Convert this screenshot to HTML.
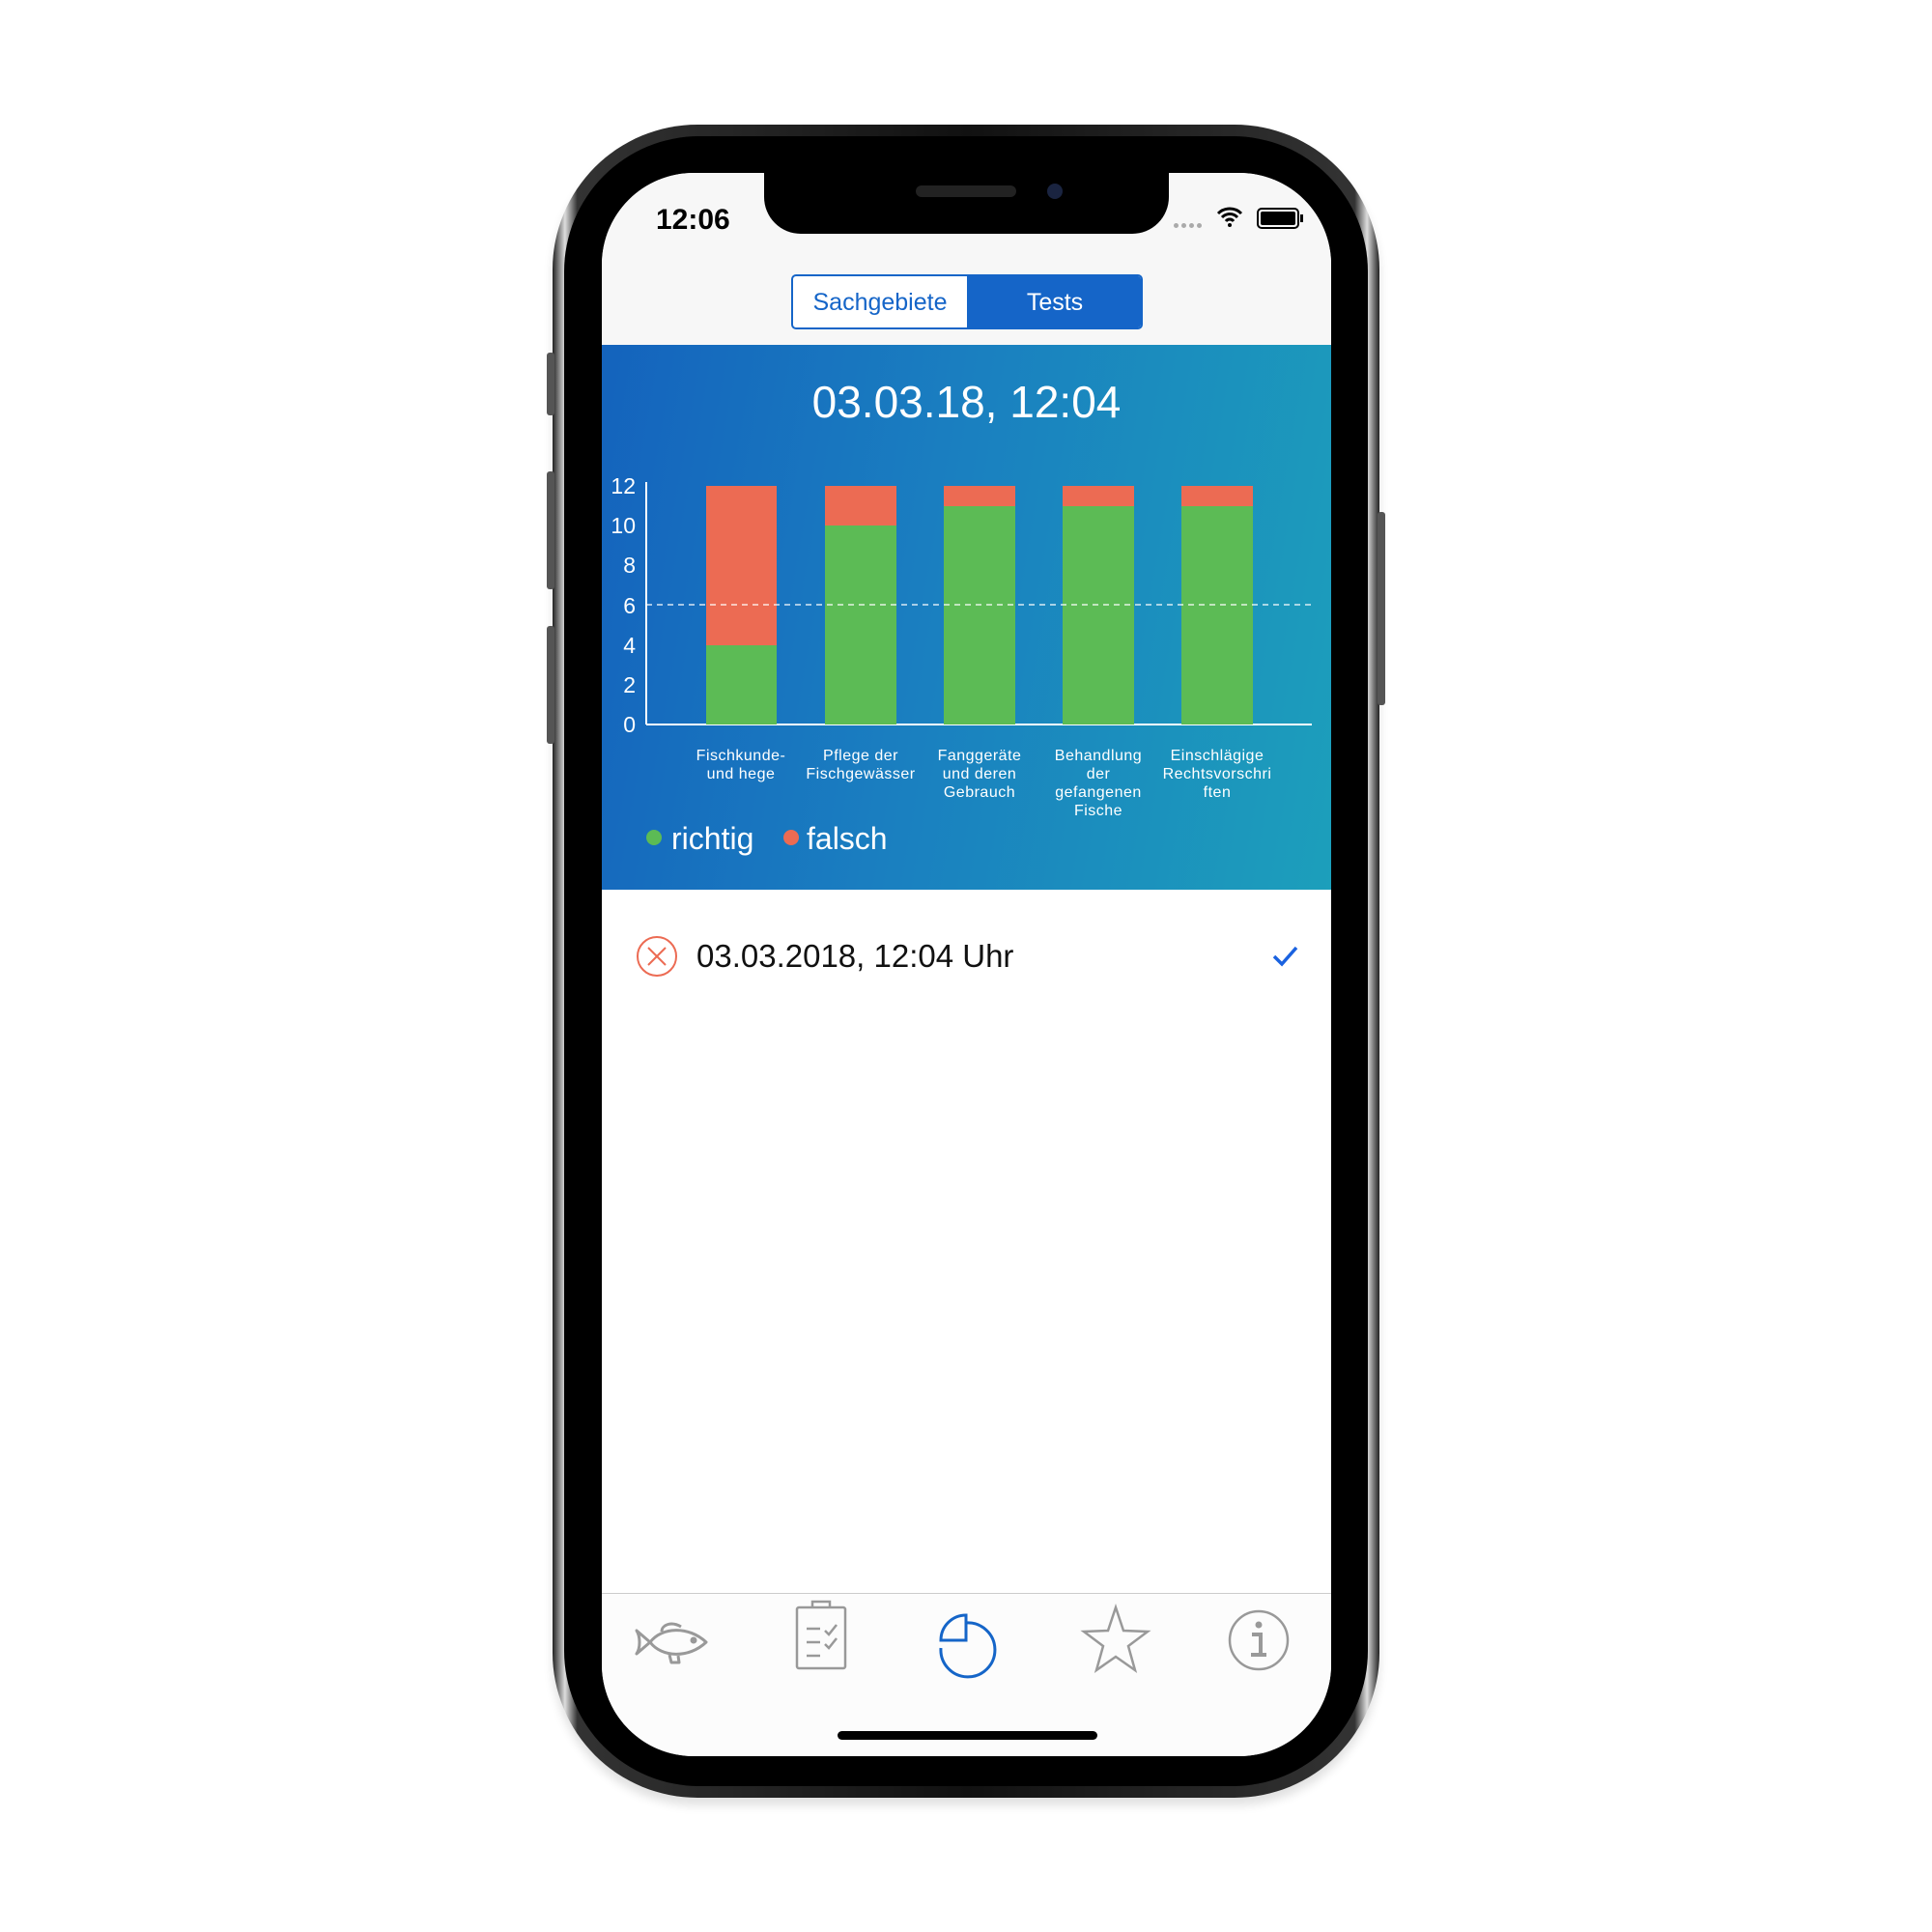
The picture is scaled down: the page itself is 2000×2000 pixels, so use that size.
<!DOCTYPE html>
<html><head><meta charset="utf-8"><style>
*{margin:0;padding:0;box-sizing:border-box}
body{width:2000px;height:2000px;background:#fff;position:relative;overflow:hidden;font-family:"Liberation Sans",sans-serif}
.abs{position:absolute}
#phone{left:572px;top:129px;width:856px;height:1732px;border-radius:150px;background:linear-gradient(90deg,#222,#ddd 1.5%,#333 3%,#111 50%,#333 97%,#ddd 98.5%,#222);box-shadow:0 8px 10px rgba(0,0,0,.12)}
#phone2{left:584px;top:141px;width:832px;height:1708px;border-radius:140px;background:#000}
#screen{left:623px;top:179px;width:755px;height:1639px;border-radius:95px;background:#fff;overflow:hidden}
</style></head><body>
<div id="phone" class="abs"></div>
<div id="phone2" class="abs"></div>
<div class="abs" style="left:566px;top:365px;width:8px;height:65px;background:#555;border-radius:3px"></div>
<div class="abs" style="left:566px;top:488px;width:8px;height:122px;background:#555;border-radius:3px"></div>
<div class="abs" style="left:566px;top:648px;width:8px;height:122px;background:#555;border-radius:3px"></div>
<div class="abs" style="left:1426px;top:530px;width:8px;height:200px;background:#555;border-radius:3px"></div>
<div id="screen" class="abs">
  <div class="abs" style="left:0;top:0;width:755px;height:178px;background:#f7f7f7"></div>
  <div class="abs" style="left:56px;top:32px;font-size:30px;font-weight:bold;color:#000">12:06</div>
  <div class="abs" style="left:0;top:178px;width:755px;height:564px;background:linear-gradient(100deg,#1463bd 0%,#1a7fc0 45%,#1c9fbb 100%)"></div>
  <div class="abs" style="left:196px;top:105px;width:364px;height:57px;border:2px solid #1565c8;border-radius:5px;overflow:hidden;background:#fff">
    <div class="abs" style="left:180px;top:0;width:184px;height:57px;background:#1565c8"></div>
    <div class="abs" style="left:0;top:13px;width:180px;text-align:center;font-size:25px;color:#1565c8">Sachgebiete</div>
    <div class="abs" style="left:180px;top:13px;width:182px;text-align:center;font-size:25px;color:#fff">Tests</div>
  </div>
  <div class="abs" style="left:0;top:210px;width:755px;text-align:center;font-size:46px;color:#fff">03.03.18, 12:04</div>
  <svg class="abs" style="left:0;top:0" width="755" height="1000">
    <g font-family="Liberation Sans" font-size="23" fill="#fff" text-anchor="end">
      <text x="35" y="332">12</text><text x="35" y="373">10</text><text x="35" y="414">8</text><text x="35" y="456">6</text><text x="35" y="497">4</text><text x="35" y="538">2</text><text x="35" y="579">0</text>
    </g>
    <line x1="46" y1="320" x2="46" y2="571" stroke="#fff" stroke-width="2"/>
    <line x1="46" y1="571" x2="735" y2="571" stroke="#fff" stroke-width="2"/>
    <rect x="108" y="324" width="73" height="165" fill="#ec6b53"/><rect x="108" y="489" width="73" height="82" fill="#5cbb55"/>
    <rect x="231" y="324" width="74" height="41" fill="#ec6b53"/><rect x="231" y="365" width="74" height="206" fill="#5cbb55"/>
    <rect x="354" y="324" width="74" height="21" fill="#ec6b53"/><rect x="354" y="345" width="74" height="226" fill="#5cbb55"/>
    <rect x="477" y="324" width="74" height="21" fill="#ec6b53"/><rect x="477" y="345" width="74" height="226" fill="#5cbb55"/>
    <rect x="600" y="324" width="74" height="21" fill="#ec6b53"/><rect x="600" y="345" width="74" height="226" fill="#5cbb55"/>
    <line x1="46" y1="447" x2="735" y2="447" stroke="#fff" stroke-width="1.3" stroke-dasharray="6,5"/>
    <g font-family="Liberation Sans" font-size="16" fill="#fff" text-anchor="middle" letter-spacing="0.5">
      <text x="144" y="608">Fischkunde-</text><text x="144" y="627">und hege</text>
      <text x="268" y="608">Pflege der</text><text x="268" y="627">Fischgewässer</text>
      <text x="391" y="608">Fanggeräte</text><text x="391" y="627">und deren</text><text x="391" y="646">Gebrauch</text>
      <text x="514" y="608">Behandlung</text><text x="514" y="627">der</text><text x="514" y="646">gefangenen</text><text x="514" y="665">Fische</text>
      <text x="637" y="608">Einschlägige</text><text x="637" y="627">Rechtsvorschri</text><text x="637" y="646">ften</text>
    </g>
    <circle cx="54" cy="688" r="8" fill="#5cbb55"/>
    <text x="72" y="700" font-family="Liberation Sans" font-size="32" fill="#fff">richtig</text>
    <circle cx="196" cy="688" r="8" fill="#ec6b53"/>
    <text x="212" y="700" font-family="Liberation Sans" font-size="32" fill="#fff">falsch</text>
    <circle cx="57" cy="811" r="20" fill="none" stroke="#ec6b53" stroke-width="2"/>
    <path d="M48 802L66 820M66 802L48 820" stroke="#ec6b53" stroke-width="2"/>
    <text x="98" y="822" font-family="Liberation Sans" font-size="33" fill="#111">03.03.2018, 12:04 Uhr</text>
    <path d="M696 811l8 8 15-17" fill="none" stroke="#1a62e0" stroke-width="3.5"/>
  </svg>
  <div class="abs" style="left:0;top:1470px;width:755px;height:1px;background:#ccc"></div>
  <div class="abs" style="left:0;top:1471px;width:755px;height:168px;background:#fcfcfc"></div>
  <svg class="abs" style="left:0;top:1471px" width="755" height="168">
    <g fill="none" stroke="#999" stroke-width="3" stroke-linejoin="round">
      <path d="M50 50 C62 34, 90 33, 108 50 C90 67, 62 66, 50 50 Z"/>
      <path d="M50 50 L36 38 C40 44, 40 56, 36 62 Z"/>
      <path d="M62 39 C62 32, 72 28, 82 34"/>
      <path d="M70 63 l2 8 h8 l-1-7"/>
      <circle cx="95" cy="48" r="2" fill="#999"/>
    </g>
    <g fill="none" stroke="#999" stroke-width="2.5">
      <rect x="202" y="14" width="50" height="63" rx="2"/>
      <path d="M218 14v-6h18v6M212 36h14M212 50h14M212 64h14M231 38l4 4 8-10M231 52l4 4 8-10"/>
    </g>
    <g fill="none" stroke="#1565c8" stroke-width="3">
      <path d="M377 30a28 28 0 1 1-26 26"/>
      <path d="M351 48a26 26 0 0 1 26-26v26h-26z"/>
    </g>
    <path d="M532 14l8 24 25 1-20 15 7 25-20-14-20 14 7-25-20-15 25-1z" fill="none" stroke="#999" stroke-width="2.5"/>
    <circle cx="680" cy="48" r="30" fill="none" stroke="#999" stroke-width="2.5"/>
    <circle cx="680" cy="32" r="3.5" fill="#999"/>
    <path d="M673 42h9v21M672 63h16" fill="none" stroke="#999" stroke-width="4"/>
  </svg>
  <div class="abs" style="left:244px;top:1613px;width:269px;height:9px;border-radius:5px;background:#000"></div>
</div>
<div class="abs" style="left:791px;top:170px;width:419px;height:72px;background:#000;border-radius:0 0 38px 38px"></div>
<div class="abs" style="left:948px;top:192px;width:104px;height:12px;border-radius:6px;background:#222"></div>
<div class="abs" style="left:1084px;top:190px;width:16px;height:16px;border-radius:50%;background:#1a2440"></div>
<div class="abs" style="left:1215px;top:231px;font-size:0">
  <span style="display:inline-block;width:5px;height:5px;border-radius:50%;background:#aaa;margin-right:3px"></span><span style="display:inline-block;width:5px;height:5px;border-radius:50%;background:#aaa;margin-right:3px"></span><span style="display:inline-block;width:5px;height:5px;border-radius:50%;background:#aaa;margin-right:3px"></span><span style="display:inline-block;width:5px;height:5px;border-radius:50%;background:#aaa"></span>
</div>
<svg class="abs" style="left:1258px;top:212px" width="30" height="24"><path d="M3 9a17 17 0 0 1 24 0M7 13a11 11 0 0 1 16 0M11 17a5 5 0 0 1 8 0" fill="none" stroke="#000" stroke-width="3"/><circle cx="15" cy="21" r="2" fill="#000"/></svg>
<div class="abs" style="left:1301px;top:215px;width:44px;height:22px;border:2px solid #000;border-radius:5px;padding:2px"><div style="width:100%;height:100%;background:#000;border-radius:2px"></div></div>
<div class="abs" style="left:1346px;top:222px;width:3px;height:8px;background:#000"></div>
</body></html>
